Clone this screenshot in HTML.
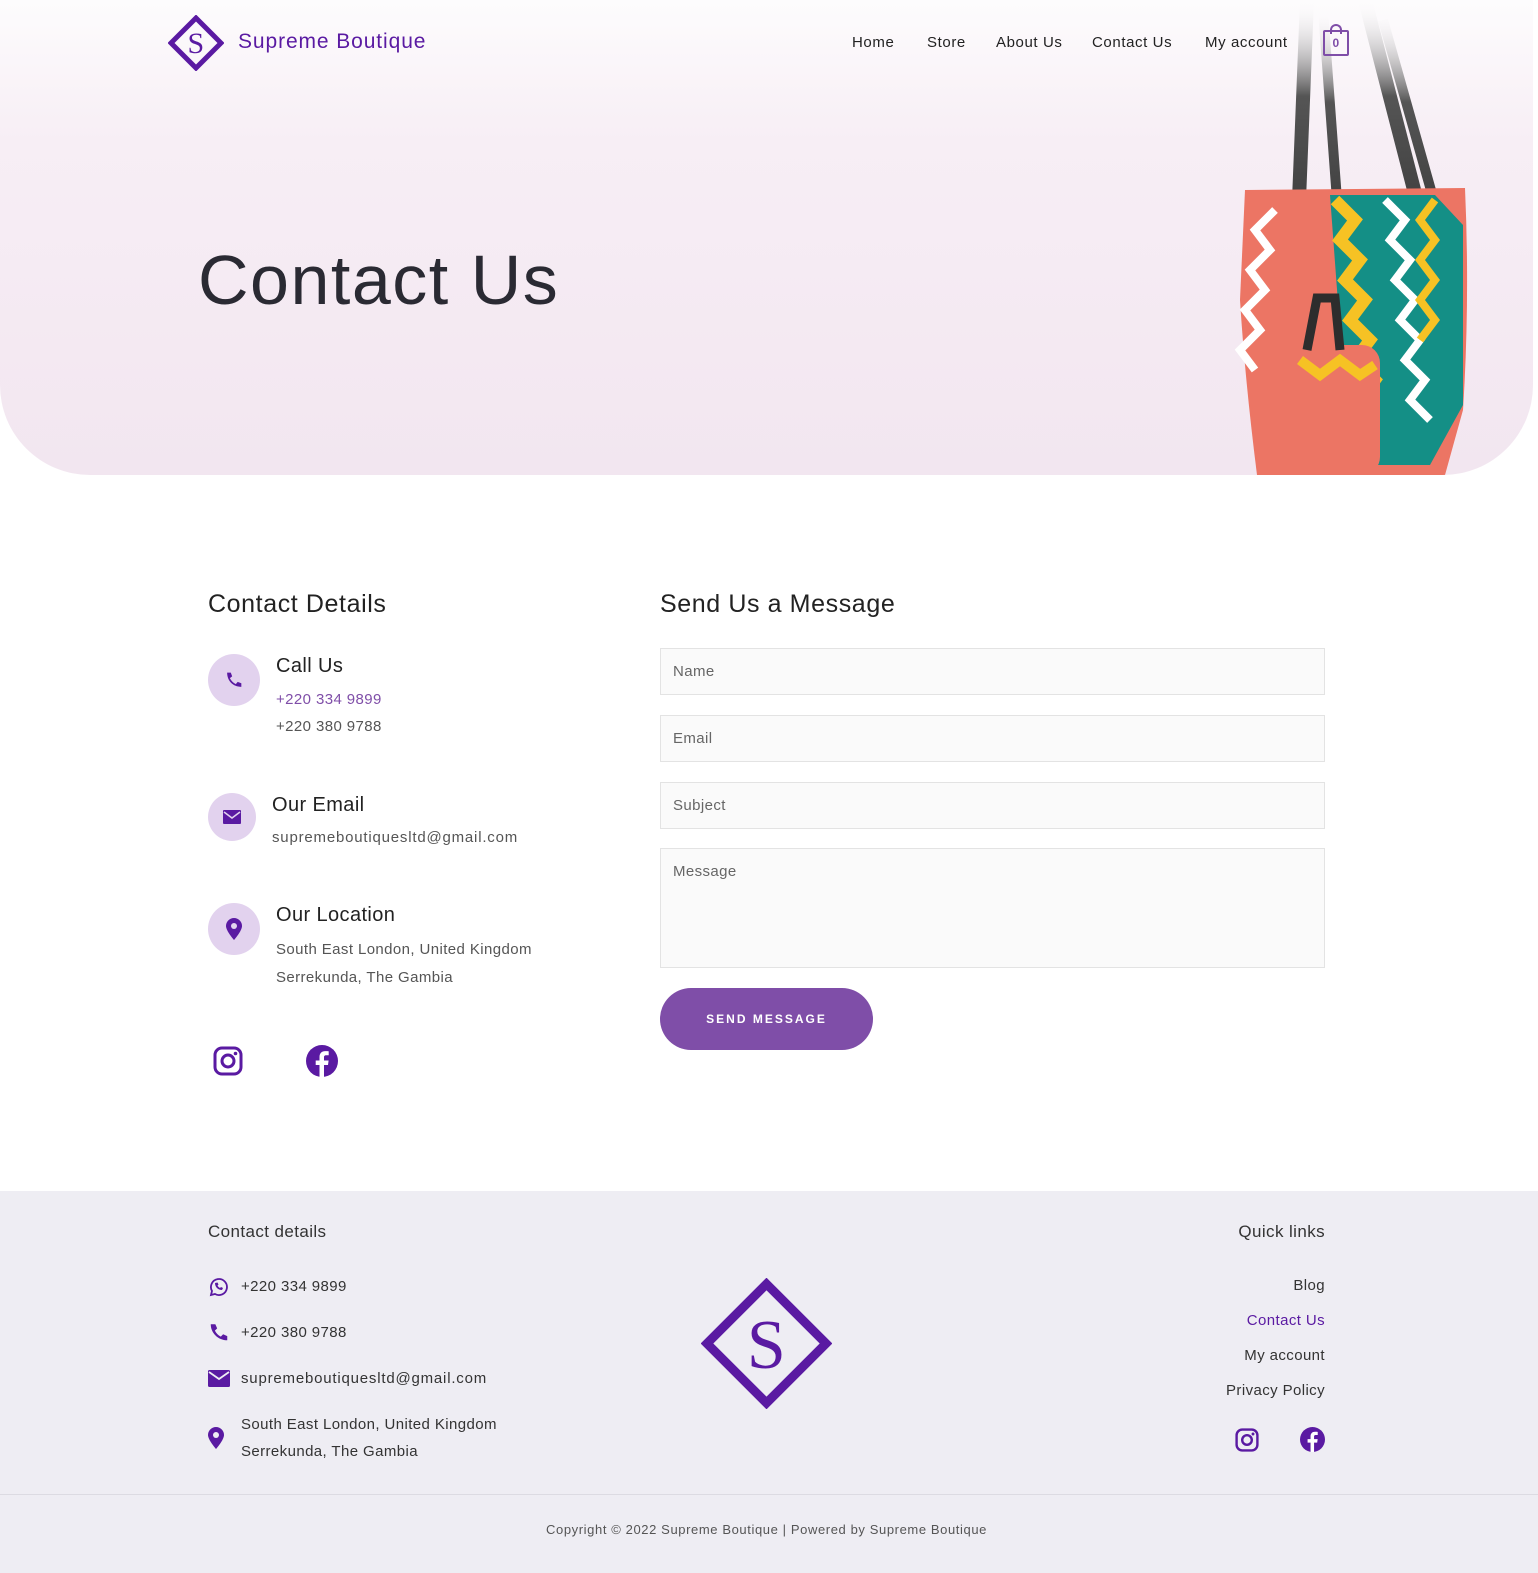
<!DOCTYPE html>
<html><head><meta charset="utf-8"><style>
*{box-sizing:border-box;margin:0;padding:0}
body{width:1538px;height:1573px;font-family:"Liberation Sans",sans-serif;background:#fff;position:relative;overflow:hidden;color:#333;letter-spacing:.4px}
.hero{position:absolute;left:0;top:0;width:1533px;height:475px;background:linear-gradient(#fdfcfd 0%,#f7eef5 30%,#f2e6f0 100%);border-radius:0 0 90px 90px;overflow:hidden}
.a{position:absolute}
.nav a{position:absolute;top:34px;font-size:15px;color:#222;text-decoration:none;letter-spacing:.6px}
h2{font-weight:normal;font-size:25px;color:#222;letter-spacing:.6px}
.ic{position:absolute;width:52px;height:52px;border-radius:50%;background:#e2d2ee;display:flex;align-items:center;justify-content:center}
.t{position:absolute;font-size:15px;color:#555}
.inp{position:absolute;left:660px;width:665px;border:1px solid #e3e3e3;background:#fafafa;font-size:15px;color:#666;padding:14px 12px}
.f{position:absolute;font-size:15px;color:#333}
</style></head><body>
<div class="hero">
<svg class="a" style="left:1195px;top:0" width="290" height="475" viewBox="0 0 290 475">
<defs><linearGradient id="st" x1="0" y1="0" x2="0" y2="1"><stop offset="0" stop-color="#fff" stop-opacity="0"/><stop offset=".4" stop-color="#555"/><stop offset="1" stop-color="#3a3a3a"/></linearGradient></defs>
<path d="M112 0 L104 200 M170 0 L232 240" stroke="url(#st)" stroke-width="14" fill="none"/>
<path d="M128 10 L142 200 M188 20 L250 240" stroke="url(#st)" stroke-width="10" fill="none"/>
<path d="M50 190 L270 188 Q275 300 268 410 L250 475 L62 475 Q50 380 45 300 Z" fill="#ec7564"/>
<path d="M135 195 L240 195 L268 225 L268 405 L235 465 L172 465 L145 330 Z" fill="#148f86"/>
<path d="M140 200 l20 20 l-15 20 l20 20 l-15 20 l20 20 l-15 20 l20 20 l-15 20 l20 20 l-15 20 l15 20" stroke="#f6c224" stroke-width="12" fill="none"/>
<path d="M190 200 l20 20 l-15 20 l20 20 l-15 20 l20 20 l-15 20 l20 20 l-15 20 l20 20 l-15 20 l20 20" stroke="#fff" stroke-width="8" fill="none"/>
<path d="M80 210 l-20 20 l15 20 l-20 20 l15 20 l-20 20 l15 20 l-20 20 l15 20" stroke="#fff" stroke-width="8" fill="none"/>
<path d="M240 200 l-15 20 l15 20 l-15 20 l15 20 l-15 20 l15 20 l-15 20" stroke="#f6c224" stroke-width="8" fill="none"/>
<rect x="100" y="345" width="85" height="130" rx="18" fill="#ec7564"/>
<path d="M105 360 l20 15 l20 -15 l20 15 l15 -10" stroke="#f6c224" stroke-width="10" fill="none"/>
<path d="M112 350 L122 298 L140 298 L145 350" stroke="#2d2d2d" stroke-width="9" fill="none"/>
</svg>
</div>
<svg class="a" style="left:168px;top:15px" width="56" height="56" viewBox="0 0 56 56"><path d="M28 3 L53 28 L28 53 L3 28 Z" fill="none" stroke="#5a1aa2" stroke-width="5"/><text x="28" y="38" text-anchor="middle" font-family="Liberation Serif,serif" font-size="30" fill="#5a1aa2">S</text></svg>
<div class="a" style="left:238px;top:30px;font-size:21px;color:#5a1aa2;letter-spacing:.9px">Supreme Boutique</div>
<div class="nav"><a style="left:852px">Home</a><a style="left:927px">Store</a><a style="left:996px">About Us</a><a style="left:1092px">Contact Us</a><a style="left:1205px">My account</a></div>
<div class="a" style="left:1323px;top:30px;width:26px;height:26px;border:2px solid #7f4ea8;border-radius:2px;font-size:12px;font-weight:bold;color:#7f4ea8;text-align:center;line-height:22px">0</div>
<div class="a" style="left:1330px;top:24px;width:12px;height:10px;border:2px solid #7f4ea8;border-bottom:none;border-radius:6px 6px 0 0"></div>
<div class="a" style="left:198px;top:240px;font-size:70px;color:#2a2a33;letter-spacing:1.5px">Contact Us</div>

<h2 class="a" style="left:208px;top:590px">Contact Details</h2>
<h2 class="a" style="left:660px;top:590px">Send Us a Message</h2>

<div class="ic" style="left:208px;top:654px"><svg width="22" height="22" viewBox="0 0 24 24"><path d="M20 15.5l-4-1.5-2 2.5c-3-1.5-5-3.5-6.5-6.5L10 8 8.5 4H4.5C4.5 13 11 19.5 20 19.5z" fill="#5a1aa2"/></svg></div>
<div class="a" style="left:276px;top:655px;font-size:20px;color:#222">Call Us</div>
<div class="t" style="left:276px;top:691px;color:#7f4ea8">+220 334 9899</div>
<div class="t" style="left:276px;top:718px">+220 380 9788</div>

<div class="ic" style="left:208px;top:793px;width:48px;height:48px"><svg width="18" height="14" viewBox="0 0 18 14"><rect width="18" height="14" rx="1" fill="#5a1aa2"/><path d="M1 2l8 6 8-6" stroke="#e2d2ee" stroke-width="1.6" fill="none"/></svg></div>
<div class="a" style="left:272px;top:794px;font-size:20px;color:#222">Our Email</div>
<div class="t" style="left:272px;top:829px;letter-spacing:.8px">supremeboutiquesltd@gmail.com</div>

<div class="ic" style="left:208px;top:903px"><svg width="16" height="22" viewBox="0 0 16 22"><path d="M8 0a8 8 0 0 1 8 8c0 5-8 14-8 14S0 13 0 8a8 8 0 0 1 8-8z" fill="#5a1aa2"/><circle cx="8" cy="8" r="3" fill="#e2d2ee"/></svg></div>
<div class="a" style="left:276px;top:904px;font-size:20px;color:#222">Our Location</div>
<div class="t" style="left:276px;top:941px">South East London, United Kingdom</div>
<div class="t" style="left:276px;top:969px">Serrekunda, The Gambia</div>

<svg class="a" style="left:213px;top:1046px" width="30" height="30" viewBox="0 0 30 30"><rect x="2" y="2" width="26" height="26" rx="7" fill="none" stroke="#5a1aa2" stroke-width="3"/><circle cx="15" cy="15" r="6" fill="none" stroke="#5a1aa2" stroke-width="3"/><circle cx="22.5" cy="7.5" r="1.8" fill="#5a1aa2"/></svg>
<svg class="a" style="left:306px;top:1045px" width="32" height="32" viewBox="0 0 32 32"><circle cx="16" cy="16" r="16" fill="#5a1aa2"/><path d="M18 32V20h4l.6-4.5H18v-3c0-1.3.4-2.2 2.3-2.2h2.4V6.3c-.4-.1-1.8-.2-3.5-.2-3.4 0-5.7 2.1-5.7 5.9v3.5h-3.8V20h3.8v12z" fill="#fff"/></svg>

<div class="inp" style="top:648px;height:47px">Name</div>
<div class="inp" style="top:715px;height:47px">Email</div>
<div class="inp" style="top:782px;height:47px">Subject</div>
<div class="inp" style="top:848px;height:120px">Message</div>
<div class="a" style="left:660px;top:988px;width:213px;height:62px;border-radius:31px;background:#7f4ea8;color:#fff;font-size:12px;font-weight:bold;letter-spacing:2px;text-align:center;line-height:62px">SEND MESSAGE</div>

<div class="a" style="left:0;top:1191px;width:1538px;height:382px;background:#eeedf3"></div>
<div class="a" style="left:0;top:1494px;width:1538px;height:1px;background:#dcdbe2"></div>
<div class="a" style="left:208px;top:1222px;font-size:17px;color:#333">Contact details</div>
<div class="a" style="right:213px;top:1222px;font-size:17px;color:#333">Quick links</div>
<svg class="a" style="left:208px;top:1277px" width="20" height="20" viewBox="0 0 20 20"><path d="M3 18l1-4a8 8 0 1 1 3 3z" fill="none" stroke="#5a1aa2" stroke-width="1.8"/><path d="M7 6c0 4 3 7 7 7l1-2-2-1-1 1c-1-.5-2-1.5-2.5-2.5l1-1-1-2z" fill="#5a1aa2"/></svg>
<div class="f" style="left:241px;top:1278px">+220 334 9899</div>
<svg class="a" style="left:208px;top:1321px" width="22" height="22" viewBox="0 0 24 24"><path d="M21 16.5l-4.5-2-2.5 2.5c-3-1.5-5-3.5-6.5-6.5L10 8 8 3.5H3C3 13 11 21 21 21z" fill="#5a1aa2"/></svg>
<div class="f" style="left:241px;top:1324px">+220 380 9788</div>
<svg class="a" style="left:208px;top:1370px" width="22" height="17" viewBox="0 0 22 17"><rect width="22" height="17" rx="1.5" fill="#5a1aa2"/><path d="M1 2l10 7 10-7" stroke="#eeedf3" stroke-width="1.8" fill="none"/></svg>
<div class="f" style="left:241px;top:1370px;letter-spacing:.8px">supremeboutiquesltd@gmail.com</div>
<svg class="a" style="left:208px;top:1427px" width="16" height="22" viewBox="0 0 16 22"><path d="M8 0a8 8 0 0 1 8 8c0 5-8 14-8 14S0 13 0 8a8 8 0 0 1 8-8z" fill="#5a1aa2"/><circle cx="8" cy="8" r="3" fill="#eeedf3"/></svg>
<div class="f" style="left:241px;top:1416px">South East London, United Kingdom</div>
<div class="f" style="left:241px;top:1443px">Serrekunda, The Gambia</div>
<svg class="a" style="left:701px;top:1278px" width="131" height="131" viewBox="0 0 131 131"><path d="M65.5 6 L125 65.5 L65.5 125 L6 65.5 Z" fill="none" stroke="#5a1aa2" stroke-width="9"/><text x="65.5" y="90" text-anchor="middle" font-family="Liberation Serif,serif" font-size="70" fill="#5a1aa2">S</text></svg>
<div class="f" style="right:213px;top:1277px">Blog</div>
<div class="f" style="right:213px;top:1312px;color:#5a1aa2">Contact Us</div>
<div class="f" style="right:213px;top:1347px">My account</div>
<div class="f" style="right:213px;top:1382px">Privacy Policy</div>
<svg class="a" style="left:1235px;top:1428px" width="24" height="24" viewBox="0 0 30 30"><rect x="2" y="2" width="26" height="26" rx="7" fill="none" stroke="#5a1aa2" stroke-width="3"/><circle cx="15" cy="15" r="6" fill="none" stroke="#5a1aa2" stroke-width="3"/><circle cx="22.5" cy="7.5" r="1.8" fill="#5a1aa2"/></svg>
<svg class="a" style="left:1300px;top:1427px" width="25" height="25" viewBox="0 0 32 32"><circle cx="16" cy="16" r="16" fill="#5a1aa2"/><path d="M18 32V20h4l.6-4.5H18v-3c0-1.3.4-2.2 2.3-2.2h2.4V6.3c-.4-.1-1.8-.2-3.5-.2-3.4 0-5.7 2.1-5.7 5.9v3.5h-3.8V20h3.8v12z" fill="#fff"/></svg>
<div class="a" style="left:0;width:1533px;top:1522px;text-align:center;font-size:13px;color:#555;letter-spacing:.6px">Copyright © 2022 Supreme Boutique | Powered by Supreme Boutique</div>
</body></html>
